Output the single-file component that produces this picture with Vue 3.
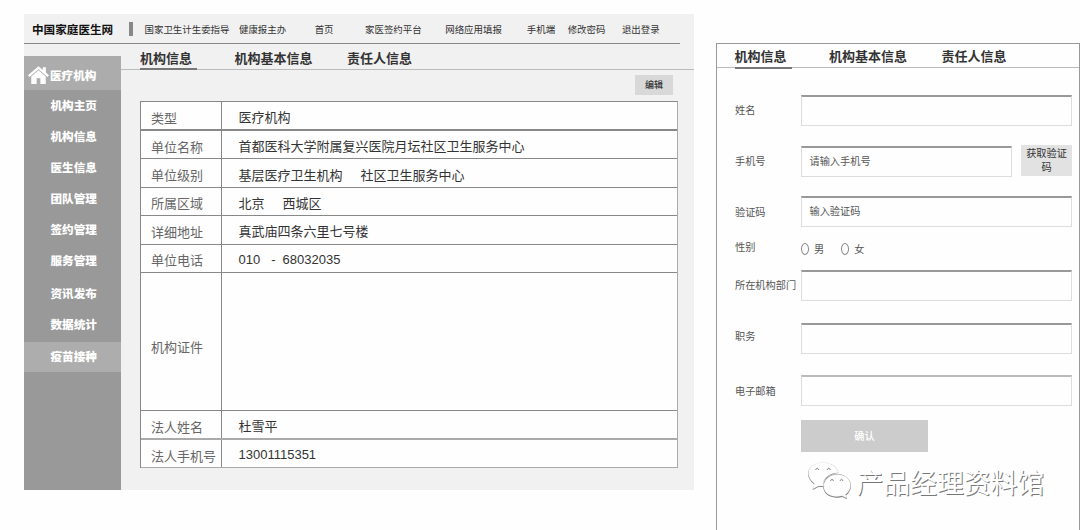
<template>
  <div class="page">
    <div class="desktop">
      <div class="header">
        <div class="site-name">中国家庭医生网</div>
        <div class="divider"></div>
        <div class="nav">
          <div v-for="item in navItems" :key="item" class="nav-item">{{ item }}</div>
        </div>
      </div>

      <div class="body">
        <div class="sidebar">
          <div class="sidebar-title">
            <svg class="home-icon" viewBox="0 0 20 17">
              <path d="M10 0.2 L0 8.7 L1.4 10.300 L10 3 L18.600 10.300 L20 8.7 L17 6.1 V1.2 H14.100 V3.7 Z" />
              <path d="M10 4 L3.100 9.900 V17 H8.200 V11.600 H11.800 V17 H16.900 V9.900 Z" />
            </svg>
            <span>医疗机构</span>
          </div>
          <div
            v-for="item in menuItems"
            :key="item"
            class="menu-item"
            :class="{ active: item === activeMenu }"
            @click="activeMenu = item"
          >
            {{ item }}
          </div>
        </div>

        <div class="content">
          <div class="tabs">
            <div
              v-for="tab in tabs"
              :key="tab"
              class="tab"
              :class="{ active: tab === activeTab }"
              @click="activeTab = tab"
            >
              {{ tab }}
            </div>
          </div>
          <div class="toolbar">
            <div class="edit-button">编辑</div>
          </div>
          <div class="info-table">
            <div v-for="row in rows" :key="row.label" class="row" :class="row.type">
              <div class="row-label">{{ row.label }}</div>
              <div class="row-value">
                <span v-for="value in row.values" :key="value">{{ value }}</span>
              </div>
            </div>
          </div>
        </div>
      </div>
    </div>

    <div class="mobile">
      <div class="tabs">
        <div
          v-for="tab in tabs"
          :key="tab"
          class="tab"
          :class="{ active: tab === activeTab }"
          @click="activeTab = tab"
        >
          {{ tab }}
        </div>
      </div>

      <div class="form">
        <div class="label">姓名</div>
        <div class="field"></div>

        <div class="label">手机号</div>
        <div class="phone-group">
          <div class="field">请输入手机号</div>
          <div class="code-button">获取验证码</div>
        </div>

        <div class="label code-label">验证码</div>
        <div class="field">输入验证码</div>

        <div class="label sex-label">性别</div>
        <div class="radios">
          <div v-for="sex in ['男', '女']" :key="sex" class="radio">
            <i class="circle"></i>
            <span>{{ sex }}</span>
          </div>
        </div>

        <div class="label">所在机构部门</div>
        <div class="field"></div>

        <div class="label job-label">职务</div>
        <div class="field"></div>

        <div class="label email-label">电子邮箱</div>
        <div class="field light"></div>
      </div>

      <div class="submit-button">确认</div>

      <div class="brand">
        <svg class="wechat" viewBox="0 0 46 38">
          <g class="bubble-shadow">
            <path d="M6.5 28 L8.500 22.500 C-3.500 14 2.500 1 16.500 1 C26 1 31 5 32.500 11 C22 12 16 18 17.500 25 L12.500 25 Z" />
            <path d="M40 33.500 C49 27 45.500 12.500 31.500 12 C13.500 12 11.500 35 30.500 35.700 Q34 35.700 36.500 34.900 L41 37.200 Z" />
          </g>
          <g class="bubble">
            <path d="M6.500 27 L8.500 21.500 C-3 13 3 0.500 16.500 0.500 C25.500 0.500 31 5 32.500 10.700 C22 11 16 17.500 17.500 24 L12.500 24 Z" />
            <path d="M39.500 32.500 C48.500 26 45 12.500 31.500 12.500 C14.700 12.500 12 34 30.500 34.500 Q33.500 34.500 36 33.700 L40.500 36 Z" />
          </g>
          <g class="eyes">
            <path d="M9.500 8 Q11.300 4.500 13 8 M21 8 Q22.800 4.500 24.500 8 M24.500 19 Q26 15.500 27.500 19 M34 19 Q35.500 15.500 37 19" />
          </g>
        </svg>
        <span>产品经理资料馆</span>
      </div>
    </div>
  </div>
</template>

<script setup>
import { ref } from "vue";

const navItems = [
  "国家卫生计生委指导",
  "健康报主办",
  "首页",
  "家医签约平台",
  "网络应用填报",
  "手机端",
  "修改密码",
  "退出登录",
];

const menuItems = [
  "机构主页",
  "机构信息",
  "医生信息",
  "团队管理",
  "签约管理",
  "服务管理",
  "资讯发布",
  "数据统计",
  "疫苗接种",
];

const tabs = ["机构信息", "机构基本信息", "责任人信息"];

const rows = [
  { label: "类型", values: ["医疗机构"], type: "strong" },
  { label: "单位名称", values: ["首都医科大学附属复兴医院月坛社区卫生服务中心"] },
  { label: "单位级别", values: ["基层医疗卫生机构", "社区卫生服务中心"] },
  { label: "所属区域", values: ["北京", "西城区"] },
  { label: "详细地址", values: ["真武庙四条六里七号楼"] },
  { label: "单位电话", values: ["010", "-", "68032035"], type: "phone" },
  { label: "机构证件", values: [], type: "license" },
  { label: "法人姓名", values: ["杜雪平"], type: "legal" },
  { label: "法人手机号", values: ["13001115351"], type: "mobile-number" },
];

const activeMenu = ref("疫苗接种");
const activeTab = ref("机构信息");
</script>

<style>
body {
  background-color: #fefefe;
}
</style>

<style scoped>
* {
  box-sizing: border-box;
}

.page {
  display: flex;
  width: 1080px;
  height: 530px;
  overflow: hidden;
  padding-left: 24px;
  font-family: "Liberation Sans", "Noto Sans CJK SC", sans-serif;
  color: #333;
  white-space: nowrap;
}

.desktop {
  width: 670px;
  height: 476px;
  margin-top: 14px;
  background-color: #f1f1f1;
  flex-shrink: 0;
}

.header {
  display: flex;
  align-items: center;
  width: 656px;
  height: 30px;
  padding-left: 8px;
  border-bottom: 1px solid #888;
}

.site-name {
  width: 97px;
  font-size: 11.6px;
  font-weight: bold;
  color: #111;
}

.divider {
  width: 4px;
  height: 14px;
  background-color: #888;
}

.nav {
  display: flex;
  margin-left: 11.5px;
  font-size: 9.45px;
}

.nav-item:nth-child(2) {
  margin-left: 9.5px;
}

.nav-item:nth-child(3) {
  margin-left: 28.5px;
}

.nav-item:nth-child(4) {
  margin-left: 31.5px;
}

.nav-item:nth-child(5) {
  margin-left: 23.5px;
}

.nav-item:nth-child(6) {
  margin-left: 25px;
}

.nav-item:nth-child(7) {
  margin-left: 12.5px;
}

.nav-item:nth-child(8) {
  margin-left: 16.5px;
}

.body {
  display: flex;
}

.sidebar {
  width: 97px;
  height: 434px;
  margin-top: 12px;
  background-color: #999;
  color: #fff;
  font-size: 11.6px;
  font-weight: 900;
}

.sidebar-title {
  display: flex;
  align-items: center;
  gap: 1px;
  height: 34px;
  padding: 4px 0 0 4px;
  background-color: #acacac;
}

.home-icon {
  width: 21px;
  height: 18px;
  fill: #fff;
}

.menu-item {
  height: 31px;
  padding-left: 26.5px;
  line-height: 32px;
  cursor: pointer;
}

.menu-item:nth-child(8) {
  margin-top: 2px;
}

.menu-item:nth-child(10) {
  margin-top: 2px;
}

.menu-item.active {
  height: 30px;
  line-height: 30px;
  background-color: #adadad;
}

.content {
  flex: 1;
}

.tabs {
  display: flex;
  height: 26px;
  padding-left: 19px;
  border-bottom: 1px solid #bbb;
  font-size: 13px;
  font-weight: bold;
}

.tab {
  height: 26px;
  line-height: 30px;
  cursor: pointer;
}

.tab.active {
  width: 57px;
  border-bottom: 2px solid #777;
}

.tab:nth-child(2) {
  margin-left: 37.5px;
}

.tab:nth-child(3) {
  margin-left: 34.5px;
}

.toolbar {
  display: flex;
  justify-content: flex-end;
  height: 31px;
  padding: 5px 21px 0 0;
}

.edit-button {
  width: 38px;
  height: 20px;
  background-color: #d8d8d8;
  font-size: 9px;
  line-height: 20px;
  text-align: center;
  font-weight: 500;
}

.info-table {
  width: 538px;
  margin-left: 19px;
  border: 1px solid #888;
  border-right: 1px solid #aaa;
  border-bottom: none;
  background-color: #fefefe;
  font-size: 13px;
}

.row {
  display: flex;
  height: 28.4px;
  border-bottom: 1px solid #888;
}

.row.strong {
  height: 29px;
  border-bottom-width: 2px;
}

.row.license {
  height: 138.5px;
}

.row.legal {
  height: 29px;
  border-bottom: 2px solid #aaa;
}

.row.mobile-number {
  height: 28px;
  border-bottom-color: #aaa;
}

.row-label {
  display: flex;
  align-items: center;
  width: 81px;
  padding: 3px 0 0 10px;
  border-right: 1px solid #888;
  color: #666;
}

.license .row-label {
  padding-top: 10px;
}

.row-value {
  display: flex;
  align-items: center;
  gap: 18px;
  padding: 2px 0 0 16.5px;
}

.phone .row-value {
  gap: 0;
  padding-top: 2px;
}

.phone .row-value span:nth-child(2) {
  margin: 0 7px 0 11px;
}

.mobile {
  width: 364px;
  height: 500px;
  margin: 43px 0 0 22px;
  border: 1px solid #999;
  flex-shrink: 0;
}

.mobile .tabs {
  height: 24px;
  padding-left: 17.5px;
}

.mobile .tab {
  height: 25px;
  line-height: 26px;
}

.form {
  display: grid;
  grid-template-columns: 66px 271px;
  grid-template-rows: 51px 50px 42px 32px 53px 52px 31px;
  padding: 27px 0 0 18px;
  font-size: 10.2px;
  color: #555;
}

.label {
  height: 31px;
  line-height: 31px;
}

.code-label {
  line-height: 33px;
}

.sex-label {
  line-height: 20px;
}

.job-label {
  line-height: 27px;
}

.email-label {
  line-height: 33px;
}

.field {
  height: 31px;
  padding-left: 7.5px;
  border: 1px solid #ddd;
  border-top: 2px solid #999;
  line-height: 28px;
}

.field.light {
  border-top-color: #bbb;
}

.phone-group {
  display: flex;
  justify-content: space-between;
}

.phone-group .field {
  width: 211px;
}

.code-button {
  width: 51px;
  height: 31px;
  padding: 2px 5px;
  margin-top: -1px;
  background-color: #e2e2e2;
  color: #333;
  line-height: 14px;
  text-align: center;
  white-space: normal;
}

.radios {
  display: flex;
  gap: 17px;
  height: 21px;
  align-items: center;
}

.radio {
  display: flex;
  align-items: center;
  gap: 5px;
}

.circle {
  width: 8px;
  height: 12px;
  border: 1px solid #888;
  border-radius: 50%;
}

.submit-button {
  width: 127px;
  height: 32px;
  margin: 14px 0 0 84px;
  background-color: #ccc;
  color: #fff;
  font-size: 10.2px;
  font-weight: 500;
  line-height: 33px;
  text-align: center;
}

.brand {
  display: flex;
  align-items: center;
  gap: 5px;
  height: 40px;
  margin: 9px 0 0 88.5px;
  font-size: 26.8px;
  color: #fff;
  text-shadow: 1px 1px 0 #777;
}

.wechat {
  width: 46px;
  height: 38px;
}

.bubble-shadow {
  fill: #777;
}

.bubble {
  fill: #fefefe;
  stroke: #ddd;
  stroke-width: 0.4;
}

.eyes {
  fill: none;
  stroke: #777;
  stroke-width: 0.9;
}
</style>
